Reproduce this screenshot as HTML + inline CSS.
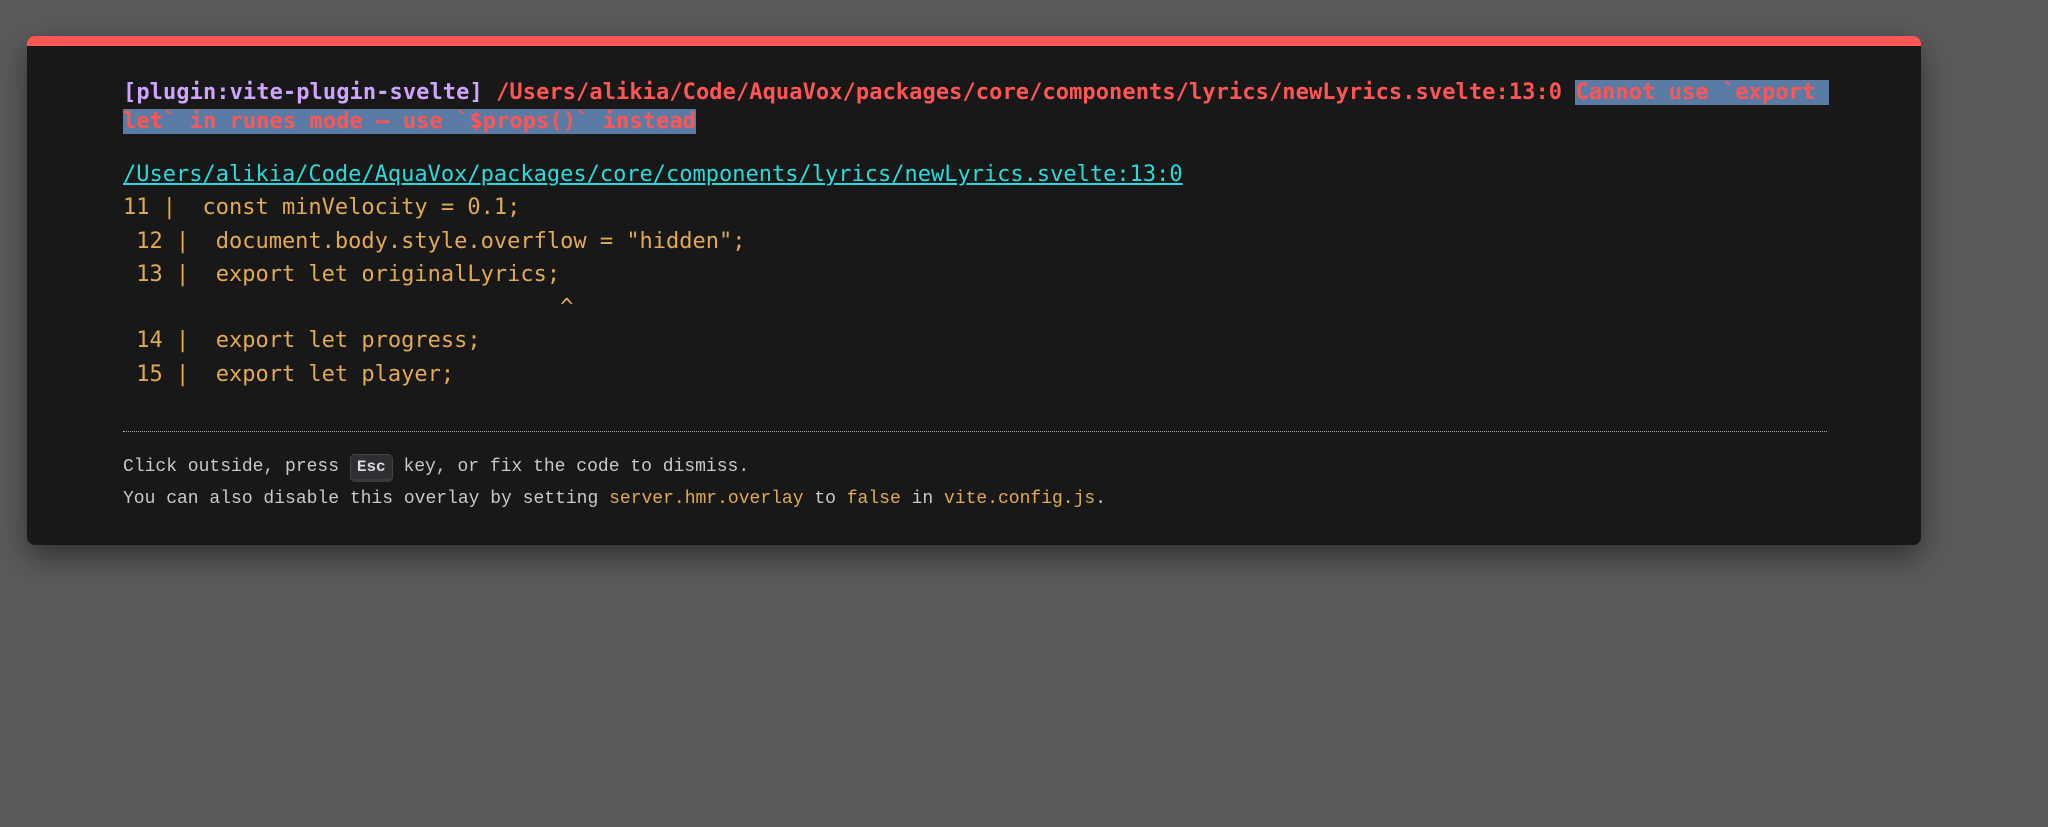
<!DOCTYPE html>
<html><head><meta charset="utf-8"><style>
html,body{margin:0;padding:0;}
body{width:2048px;height:827px;background:#5a5a5a;position:relative;overflow:hidden;font-family:"Liberation Mono","DejaVu Sans Mono",monospace;}
.box{position:absolute;left:27px;top:36px;width:1894px;height:509px;background:#181818;border-top:10px solid #ff5555;box-sizing:border-box;border-radius:8px 8px 8px 8px;box-shadow:0 12px 30px rgba(0,0,0,.45);}
.hdr{position:absolute;left:123px;top:78px;width:1710px;font-size:22px;line-height:29px;font-weight:bold;color:#ff5555;white-space:pre-wrap;margin:0;letter-spacing:0.08px;}
.plugin{color:#cfa4ff;}
.sel{background:#5a7ca4;}
.code{position:absolute;left:123px;top:158px;margin:0;font-size:22px;line-height:33.3px;color:#e2aa53;white-space:pre;}
.link{color:#2dd9da;text-decoration:underline;}
.sep{position:absolute;left:123px;top:431px;width:1704px;border-top:1px dotted #aaa;}
.foot{position:absolute;left:123px;top:451px;font-size:18px;line-height:32px;color:#c9c9c9;white-space:pre;}
.y{color:#e2aa53;}
kbd{font-family:inherit;font-weight:bold;font-size:16px;background:#2e2e33;border:1px solid #444;border-bottom:3px solid #3a3a40;border-radius:5px;padding:3px 6px;color:#ddd;}
</style></head><body>
<div class="box"></div>
<pre class="hdr"><span class="plugin">[plugin:vite-plugin-svelte]</span> /Users/alikia/Code/AquaVox/packages/core/components/lyrics/newLyrics.svelte:13:0 <span class="sel">Cannot use `export let` in runes mode — use `$props()` instead</span></pre>
<pre class="code"><span class="link">/Users/alikia/Code/AquaVox/packages/core/components/lyrics/newLyrics.svelte:13:0</span>
11 |  const minVelocity = 0.1;
 12 |  document.body.style.overflow = "hidden";
 13 |  export let originalLyrics;
                                 ^
 14 |  export let progress;
 15 |  export let player;</pre>
<div class="sep"></div>
<div class="foot">Click outside, press <kbd>Esc</kbd> key, or fix the code to dismiss.
You can also disable this overlay by setting <span class="y">server.hmr.overlay</span> to <span class="y">false</span> in <span class="y">vite.config.js</span>.</div>
</body></html>
